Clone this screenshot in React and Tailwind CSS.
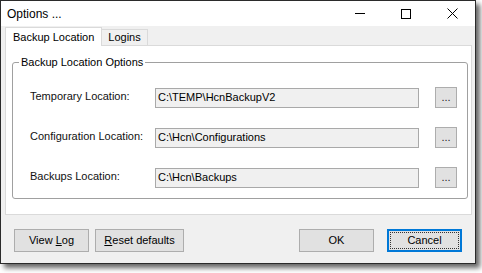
import React from 'react'

const font = { fontFamily: '"Liberation Sans", Arial, sans-serif' }

const BrowseRow = ({ label, value }) => (
  <div className="flex items-center h-[21px] ml-[11px]">
    <span className="w-[125px] text-[11px] text-[#111] -mt-[2px]">{label}</span>
    <div className="w-[264px] h-[20px] border border-[#a9a9a9] bg-[#f0f0f0] flex items-center pl-[2px] text-[11px] text-black">
      {value}
    </div>
    <button className="ml-[16px] w-[22px] h-[21px] border border-[#adadad] bg-[#e1e1e1] text-[11px] leading-none text-[#222] flex items-end justify-center pb-[4px]">
      ...
    </button>
  </div>
)

const Btn = ({ children, focused, w = 'w-[75px]' }) => (
  <button
    className={`${w} h-[23px] bg-[#e1e1e1] text-[11px] text-black flex ${
      focused ? 'border-2 border-[#0078d7] p-[1px]' : 'border border-[#adadad]'
    }`}
  >
    <span className={`flex-1 flex items-center justify-center ${focused ? 'border border-dotted border-[#333]' : ''}`}>
      <span>{children}</span>
    </span>
  </button>
)

export default function App() {
  return (
    <div className="w-[482px] h-[273px] bg-white" style={font}>
      <div className="w-[476px] h-[264px] border border-[#2b2b2b] bg-[#f0f0f0] flex flex-col shadow-[4px_4px_5px_rgba(0,0,0,0.6)]">
        {/* Title bar */}
        <div className="h-[25px] bg-white flex items-center">
          <span className="pl-[6px] text-[12px] text-black flex-1">Options ...</span>
          <div className="w-[46px] h-full flex items-center justify-center">
            <div className="w-[10px] h-px bg-black" />
          </div>
          <div className="w-[46px] h-full flex items-center justify-center">
            <div className="w-[10px] h-[10px] border border-black" />
          </div>
          <div className="w-[46px] h-full flex items-center justify-center">
            <svg width="11" height="11" viewBox="0 0 11 11">
              <path d="M0.5 0.5 L10.5 10.5 M10.5 0.5 L0.5 10.5" stroke="#000" strokeWidth="1" fill="none" />
            </svg>
          </div>
        </div>

        {/* Tabs */}
        <div className="relative z-10 h-[20px] -mb-px flex items-end pl-[4px] text-[11px] text-black">
          <div className="w-[97px] h-[19px] bg-white border border-b-0 border-[#dadada] flex items-center pl-[7px]">
            Backup Location
          </div>
          <div className="w-[46px] h-[16px] mb-px bg-[#f0f0f0] border border-l-0 border-b-0 border-[#dadada] flex items-center justify-center">
            Logins
          </div>
        </div>

        <div className="h-[170px] ml-[4px] mr-[3px] bg-white border border-[#dadada]">
          <fieldset className="mt-[10px] ml-[6px] w-[456px] border border-[#a0a0a0] rounded-[3px] px-[6px] pt-[18px] pb-[10px] flex flex-col gap-[19px]">
            <legend className="px-[2px] text-[11px] leading-[13px] text-black">Backup Location Options</legend>
            <BrowseRow label="Temporary Location:" value="C:\TEMP\HcnBackupV2" />
            <BrowseRow label="Configuration Location:" value="C:\Hcn\Configurations" />
            <BrowseRow label="Backups Location:" value="C:\Hcn\Backups" />
          </fieldset>
        </div>

        {/* Bottom buttons */}
        <div className="flex-1 flex items-start pt-[14px] px-[13px]">
          <Btn>
            View <u>L</u>og
          </Btn>
          <div className="w-[6px]" />
          <Btn w="w-[89px]">
            <u>R</u>eset defaults
          </Btn>
          <div className="flex-1" />
          <Btn>OK</Btn>
          <div className="w-[13px]" />
          <Btn focused>Cancel</Btn>
        </div>
      </div>
    </div>
  )
}
